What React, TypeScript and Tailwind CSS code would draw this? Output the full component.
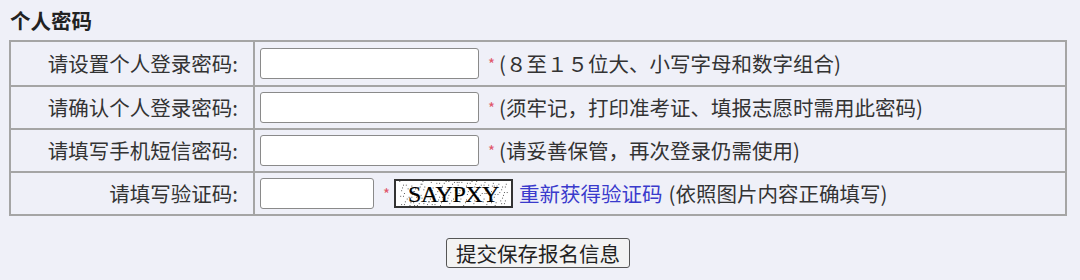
import React from "react";

const rows = [
  { label: "请设置个人登录密码:", hint: "(８至１５位大、小写字母和数字组合)" },
  { label: "请确认个人登录密码:", hint: "(须牢记，打印准考证、填报志愿时需用此密码)" },
  { label: "请填写手机短信密码:", hint: "(请妥善保管，再次登录仍需使用)" },
];

// fixed noise so the captcha looks the same every run
const dots = Array.from({ length: 160 }, (_, i) => ({
  x: (i * 37 + (i % 5) * 11) % 117,
  y: (i * 53 + (i % 7) * 3) % 27,
}));

function Captcha() {
  return (
    <div className="relative flex h-[29px] w-[119px] items-center justify-center overflow-hidden border-2 border-[#333] bg-white">
      <svg className="absolute inset-0" width="115" height="25" viewBox="0 0 117 27">
        {dots.map((d, i) => (
          <rect key={i} x={d.x} y={d.y} width="1" height="1" fill="#444" />
        ))}
      </svg>
      <span className="relative font-['Liberation_Serif',serif] text-[24px] leading-none tracking-[-0.5px] text-black [-webkit-text-stroke:0.2px_black]">
        SAYPXY
      </span>
    </div>
  );
}

function Star() {
  return <span className="ml-[9px] mr-[4px] text-[15px] text-[#e0566a]">*</span>;
}

export default function App() {
  return (
    <div className="min-h-[280px] w-[1080px] bg-[#eff0f8] font-['Noto_Sans_CJK_SC',sans-serif] text-[20.5px] text-[#333]">
      <div className="w-[1067px] pl-[9px]">
        <div className="flex h-[40px] items-center pl-[1px] font-bold leading-none text-[#222]">个人密码</div>
        <div className="border-2 border-[#a5a5a5]">
          {rows.map((row, i) => (
            <div key={row.label} className={`flex h-[43px] ${i > 0 ? "border-t-2 border-[#a5a5a5]" : ""}`}>
              <div className="flex w-[244px] items-center justify-end border-r-2 border-[#a5a5a5] pr-[15px] leading-none">
                {row.label}
              </div>
              <div className="flex items-center pl-[5px] leading-none">
                <div className="h-[31px] w-[219px] rounded-[3px] border border-[#8a8a8a] bg-white" />
                <Star />
                <span>{row.hint}</span>
              </div>
            </div>
          ))}
          <div className="flex h-[43px] border-t-2 border-[#a5a5a5]">
            <div className="flex w-[244px] items-center justify-end border-r-2 border-[#a5a5a5] pr-[15px] leading-none">
              请填写验证码:
            </div>
            <div className="flex items-center pl-[5px] leading-none">
              <div className="h-[31px] w-[114px] rounded-[3px] border border-[#8a8a8a] bg-white" />
              <Star />
              <Captcha />
              <span className="ml-[6px] text-[#3a3acc]">重新获得验证码</span>
              <span className="ml-[6px]">(依照图片内容正确填写)</span>
            </div>
          </div>
        </div>
        <div className="flex justify-center pt-[22px]">
          <button
            type="button"
            className="h-[30px] rounded-[3px] border border-[#555] bg-[#f3f3f3] px-[9px] leading-none text-[#222]"
          >
            提交保存报名信息
          </button>
        </div>
      </div>
    </div>
  );
}
